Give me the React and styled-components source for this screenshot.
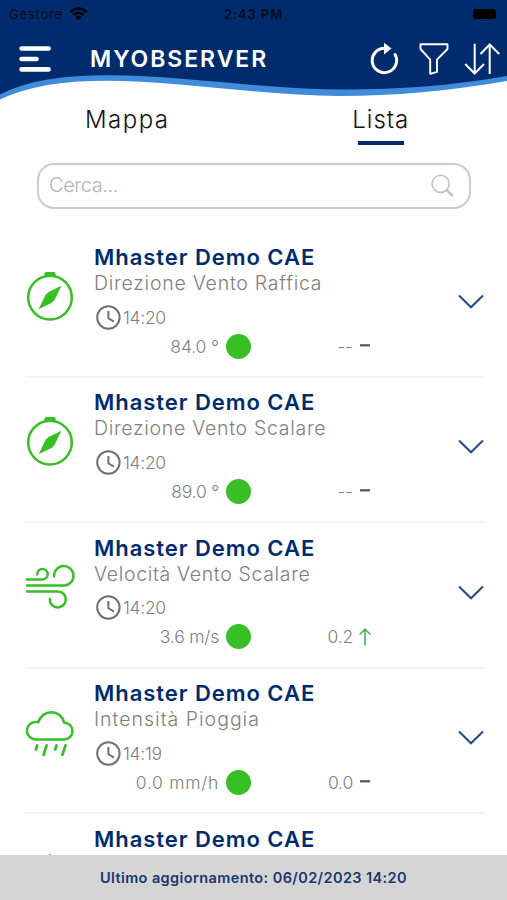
import styled, { createGlobalStyle } from 'styled-components'

const colors = {
  primary: '#002c6e',
  wave: '#3f8bdc',
  green: '#38bf26',
  grey: '#808080',
  border: '#cbcbcb',
}

const GlobalStyle = createGlobalStyle`
  * {
    box-sizing: border-box;
  }
  body {
    margin: 0;
    background: #ffffff;
    font-family: Inter, 'Liberation Sans', sans-serif;
  }
  svg {
    display: block;
    flex-shrink: 0;
  }
`

const Screen = styled.div`
  width: 507px;
  height: 900px;
  display: flex;
  flex-direction: column;
  overflow: hidden;
  background: #ffffff;
`

const HeaderContainer = styled.header`
  position: relative;
  height: 100px;
  flex-shrink: 0;
`

const Wave = styled.svg`
  position: absolute;
  top: 0;
  left: 0;
`

const StatusBar = styled.div`
  position: relative;
  display: grid;
  grid-template-columns: 1fr auto 1fr;
  align-items: center;
  height: 28px;
  padding: 0 11px 0 9px;
  font-size: 13px;
  color: #060d1c;
`

const Carrier = styled.div`
  display: flex;
  align-items: center;
  gap: 6px;
  letter-spacing: 0.8px;
`

const Clock = styled.span`
  padding-left: 2px;
  font-weight: 600;
  letter-spacing: 0.9px;
`

const Battery = styled.span`
  justify-self: end;
  width: 23px;
  height: 10px;
  border-radius: 3px;
  background: #000000;
`

const NavBar = styled.div`
  position: relative;
  display: flex;
  align-items: center;
  height: 61px;
  padding: 0 7px 0 19px;
`

const AppTitle = styled.h1`
  flex: 1;
  margin: 1px 0 0 38px;
  font-size: 23px;
  font-weight: 600;
  letter-spacing: 1.95px;
  color: #ffffff;
`

const Actions = styled.div`
  display: flex;
  align-items: center;
  gap: 15.5px;
  & svg:first-child {
    margin-right: 4px;
  }
`

const Tabs = styled.nav`
  display: grid;
  grid-template-columns: 1fr 1fr;
  height: 63px;
  flex-shrink: 0;
`

const Tab = styled.button`
  display: flex;
  flex-direction: column;
  align-items: center;
  padding: 5px 0 0 1px;
  border: none;
  background: none;
  font-family: inherit;
  font-size: 24px;
  font-weight: 300;
  line-height: 30px;
  letter-spacing: ${({ $spacing }) => $spacing}px;
  color: #111111;
  &::after {
    content: '';
    width: 46px;
    height: 4px;
    margin-top: 6px;
    background: ${({ $active }) => ($active ? colors.primary : 'transparent')};
  }
`

const SearchBox = styled.div`
  display: flex;
  align-items: center;
  justify-content: space-between;
  height: 46px;
  flex-shrink: 0;
  margin: 0 36px 0 37px;
  padding: 0 15px 2px 10px;
  border: 2px solid ${colors.border};
  border-radius: 17px;
  font-size: 20px;
  font-weight: 300;
  letter-spacing: -0.4px;
  color: #b5b5b5;
`

const List = styled.main`
  flex: 1;
  min-height: 0;
  padding: 23.5px 22px 0 25px;
  overflow: hidden;
`

const Row = styled.article`
  display: flex;
  height: 145.4px;
  padding-top: 12.5px;
  border-bottom: 2px solid #f5f5f5;
`

const IconSlot = styled.div`
  width: 50px;
  margin: 27px 19px 0 0;
`

const Content = styled.div`
  flex: 1;
  color: ${colors.grey};
  font-weight: 300;
  white-space: nowrap;
`

const StationName = styled.h2`
  margin: 0 0 1px;
  font-size: 22px;
  line-height: 25px;
  font-weight: 600;
  letter-spacing: 0.95px;
  color: ${colors.primary};
`

const SensorName = styled.div`
  font-size: 19.5px;
  line-height: 24px;
  letter-spacing: ${({ $spacing }) => $spacing}px;
`

const Time = styled.div`
  display: flex;
  align-items: center;
  gap: 2px;
  height: 26px;
  margin-top: 9px;
  padding-left: 2px;
  font-size: 17.5px;
  letter-spacing: -0.3px;
`

const Values = styled.div`
  display: grid;
  grid-template-columns: 125px 32px 102px auto;
  align-items: center;
  height: 26px;
  margin-top: 3px;
  font-size: 17.5px;
`

const Reading = styled.span`
  text-align: right;
  letter-spacing: ${({ $spacing }) => $spacing}px;
`

const Dot = styled.span`
  width: 25px;
  height: 25px;
  margin-left: 7px;
  border-radius: 50%;
  background: ${colors.green};
`

const Delta = styled.span`
  text-align: right;
  letter-spacing: -0.2px;
`

const Trend = styled.span`
  margin-left: 6px;
`

const ChevronSlot = styled.div`
  margin: 49px 1px 0 0;
`

const Footer = styled.footer`
  display: flex;
  align-items: center;
  justify-content: center;
  height: 45px;
  flex-shrink: 0;
  background: #d5d5d5;
  font-size: 14.5px;
  font-weight: 600;
  letter-spacing: 0.4px;
  color: #17386f;
`

const sensors = [
  { icon: 'compass', name: 'Direzione Vento Raffica', spacing: 0.75, time: '14:20', value: '84.0 °', valueSpacing: -0.1, delta: '--' },
  { icon: 'compass', name: 'Direzione Vento Scalare', spacing: 0.7, time: '14:20', value: '89.0 °', valueSpacing: -0.2, delta: '--' },
  { icon: 'wind', name: 'Velocità Vento Scalare', spacing: 0.65, time: '14:20', value: '3.6 m/s', valueSpacing: -0.2, delta: '0.2', up: true },
  { icon: 'rain', name: 'Intensità Pioggia', spacing: 1, time: '14:19', value: '0.0 mm/h', valueSpacing: 0.7, delta: '0.0' },
  { icon: 'drop' },
]

function SensorIcon({ type }) {
  return (
    <svg
      width="50"
      height="50"
      viewBox="0 0 50 50"
      fill="none"
      stroke={colors.green}
      strokeWidth="2.5"
      strokeLinecap="round"
      strokeLinejoin="round"
    >
      {type === 'compass' && (
        <>
          <circle cx="25" cy="25.6" r="21.8" />
          <path d="M19.3 5V2.5Q19.3-.2 22-.2H28Q30.7-.2 30.7 2.5V5Q25 3.5 19.3 5Z" fill={colors.green} stroke="none" />
          <path d="M36.5 13.8L29.3 28.2L26.5 31L13.5 37.2L20.7 22.8L23.5 20Z" fill={colors.green} stroke="none" />
        </>
      )}
      {type === 'wind' && (
        <>
          <path d="M2 16.4H17.7A5.2 5.2 0 1 0 12.3 11.4" />
          <path d="M2 22.4H39A9.7 9.7 0 1 0 29.1 13.3" />
          <path d="M2 28.4H33A8 8 0 1 1 24.8 36" />
        </>
      )}
      {type === 'rain' && (
        <>
          <path d="M10.7 31.4A8.6 8.6 0 0 1 10.5 14.1Q12 13.9 13.4 14.2C17.5 .7 36 .8 39.2 14.8A8.2 8.2 0 0 1 39.3 31.4Z" />
          <path d="M12.2 37.4L11 41.5M21.6 37.4L18.6 46.8M31.5 37.4L30.2 41.5M40.5 37.4L37.4 46.8" strokeWidth="2.8" />
        </>
      )}
      {type === 'drop' && <path d="M25 1.3C20 10 11 19 11 30A14 14 0 0 0 39 30C39 19 30 10 25 1.3Z" />}
    </svg>
  )
}

function Header() {
  return (
    <HeaderContainer>
      <Wave width="507" height="101" viewBox="0 0 507 101">
        <path
          d="M0 0H507V81C449 91 393 96 340 96C264 96 181 80.7 105 80.7C63 80.7 28 86 0 99.5Z"
          fill={colors.wave}
        />
        <path
          d="M0 0H507V76C449 86 400 89.5 346 89.5C264 89.5 181 75.2 110 75.2C63 75.2 28 80 0 94.5Z"
          fill={colors.primary}
        />
      </Wave>
      <StatusBar>
        <Carrier>
          Gestore
          <svg width="19" height="14" viewBox="0 0 19 14" fill="none" stroke="#000000" strokeWidth="2.5">
            <path d="M1.3 5Q9.5-2 17.7 5M4.2 8.1Q9.5 3.7 14.8 8.1" />
            <path d="M6.3 10Q9.5 7.5 12.7 10L9.5 13.2Z" fill="#000000" stroke="none" />
          </svg>
        </Carrier>
        <Clock>2:43 PM</Clock>
        <Battery />
      </StatusBar>
      <NavBar>
        <svg width="33" height="28" viewBox="0 0 33 28" stroke="#ffffff" strokeWidth="4.6" strokeLinecap="round">
          <path d="M2.6 3.5H29.6M2.6 14H17.5M2.6 24.4H29.6" />
        </svg>
        <AppTitle>MYOBSERVER</AppTitle>
        <Actions>
          <svg width="29" height="32" viewBox="0 0 29 32" fill="none" stroke="#ffffff" strokeWidth="3">
            <path d="M25.1 11.5A12.2 12.2 0 1 1 14.5 5.2" strokeLinecap="round" />
            <path d="M14-.3L21.5 5.4L14 11.4Z" fill="#ffffff" stroke="none" />
          </svg>
          <svg width="30" height="32" viewBox="0 0 30 32" fill="none" stroke="#ffffff" strokeWidth="1.9">
            <path d="M1.5 1.2H28.5V6L18 16.7V28.8L11.2 30.8V16.7L1.5 6Z" strokeLinejoin="round" />
          </svg>
          <svg width="36" height="32" viewBox="0 0 36 32" fill="none" stroke="#ffffff" strokeWidth="2">
            <path d="M10.7 .7V30M1.2 21L10.7 30.5L20 21M25.7 31V2M16.5 11L25.7 1.5L35.2 11" />
          </svg>
        </Actions>
      </NavBar>
    </HeaderContainer>
  )
}

function SensorRow({ sensor }) {
  return (
    <Row>
      <IconSlot>
        <SensorIcon type={sensor.icon} />
      </IconSlot>
      <Content>
        <StationName>Mhaster Demo CAE</StationName>
        {sensor.name && (
          <>
            <SensorName $spacing={sensor.spacing}>{sensor.name}</SensorName>
            <Time>
              <svg width="25" height="25" viewBox="0 0 25 25" fill="none" stroke="#707070" strokeWidth="2">
                <circle cx="12.4" cy="12.5" r="11.2" />
                <path d="M12.4 6V13.3L18 16.7" />
              </svg>
              {sensor.time}
            </Time>
            <Values>
              <Reading $spacing={sensor.valueSpacing}>{sensor.value}</Reading>
              <Dot />
              <Delta>{sensor.delta}</Delta>
              <Trend>
                {sensor.up ? (
                  <svg width="12" height="18" viewBox="0 0 12 18" fill="none" stroke="#43b84e" strokeWidth="1.6">
                    <path d="M6 17.5V1.5M.7 6.5L6 1.2L11.3 6.5" />
                  </svg>
                ) : (
                  <svg width="12" height="18" viewBox="0 0 12 18" stroke="#555555" strokeWidth="2.2">
                    <path d="M1 8.3H11" />
                  </svg>
                )}
              </Trend>
            </Values>
          </>
        )}
      </Content>
      <ChevronSlot>
        <svg width="26" height="15" viewBox="0 0 26 15" fill="none" stroke="#214b88" strokeWidth="2">
          <path d="M1 1.5L13 13.3L25 1.5" />
        </svg>
      </ChevronSlot>
    </Row>
  )
}

function App() {
  return (
    <Screen>
      <GlobalStyle />
      <Header />
      <Tabs>
        <Tab $spacing={1.5}>Mappa</Tab>
        <Tab $spacing={1} $active>
          Lista
        </Tab>
      </Tabs>
      <SearchBox>
        Cerca...
        <svg width="23" height="23" viewBox="0 0 23 23" fill="none" stroke="#c2c2c2" strokeLinecap="round">
          <circle cx="9.6" cy="9.8" r="8.6" strokeWidth="1.5" />
          <path d="M16 16.2L21 21.4" strokeWidth="2.6" />
        </svg>
      </SearchBox>
      <List>
        {sensors.map((sensor, index) => (
          <SensorRow key={index} sensor={sensor} />
        ))}
      </List>
      <Footer>Ultimo aggiornamento: 06/02/2023 14:20</Footer>
    </Screen>
  )
}

export default App
